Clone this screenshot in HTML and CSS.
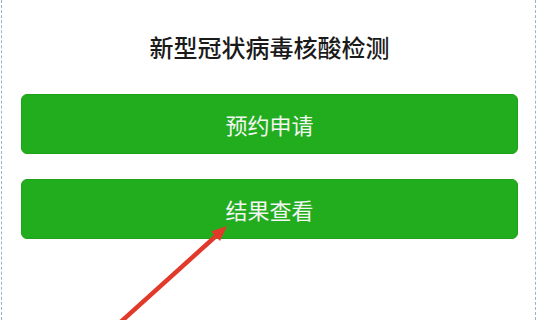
FILE: index.html
```html
<!DOCTYPE html>
<html lang="zh-CN">
<head>
    <meta charset="UTF-8">
    <title>新型冠状病毒核酸检测</title>
    <link rel="stylesheet" href="styles.css">
</head>
<body>
    <div id="page">
        <h1 class="title">新型冠状病毒核酸检测</h1>
        <button class="action">预约申请</button>
        <button class="action">结果查看</button>

        <svg class="arrow" width="540" height="320" viewBox="0 0 540 320">
            <line x1="114" y1="328" x2="216" y2="236" stroke="#e13a2b" stroke-width="4.5" stroke-linecap="round"/>
            <polygon points="227,226 220,241 211,231.5" fill="#e13a2b"/>
        </svg>
    </div>
</body>
</html>
```

FILE: styles.css
```css
html, body {
    margin: 0;
    background: #fff;
}
#page {
    position: relative;
    margin-left: 1px;
    height: 320px;
    border-left: 1px dashed #9cb3cc;
    border-right: 1px dashed #9cb3cc;
    padding: 30px 17px 0 19px;
    box-sizing: border-box;
    width: 535px;
    font-family: "Noto Sans CJK SC", "Noto Sans", sans-serif;
    overflow: hidden;
}
.title {
    margin: 0 0 30px;
    text-align: center;
    font-size: 24px;
    line-height: 34px;
    font-weight: 500;
    color: #1a1a1a;
}
.action {
    display: block;
    width: 100%;
    height: 60px;
    margin: 0 0 25px;
    border: 1px solid #1fa21b;
    border-radius: 6px;
    background: #22ad1e;
    color: #f3f6f2;
    font-family: inherit;
    font-size: 22px;
    padding: 0;
}
.arrow {
    position: absolute;
    left: -2px;
    top: 0;
    pointer-events: none;
}
```
